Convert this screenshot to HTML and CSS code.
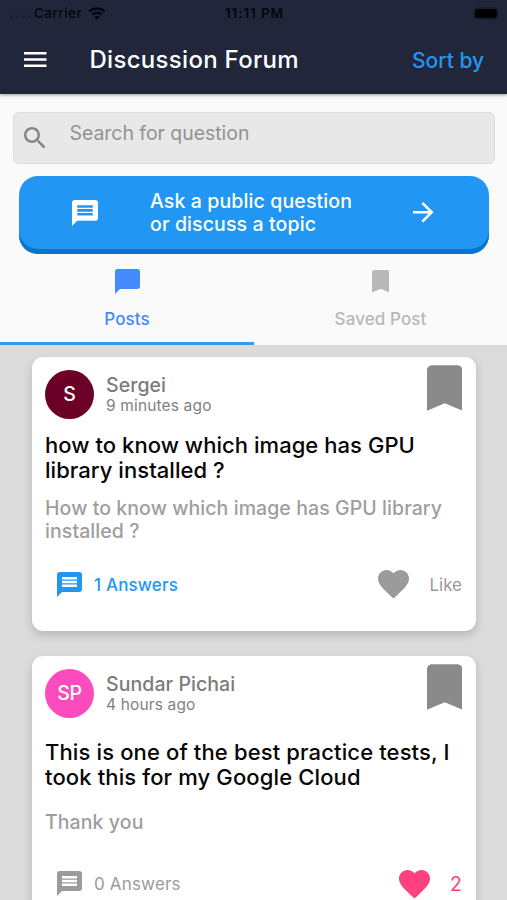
FILE: index.html
```html
<!DOCTYPE html>
<html lang="en">
<head>
<meta charset="utf-8">
<title>Discussion Forum</title>
<link rel="stylesheet" href="styles.css">
</head>
<body>
<svg class="defs" aria-hidden="true">
  <symbol id="chat" viewBox="2 2 20 20"><path d="M20 2H4c-1.1 0-1.99.9-1.99 2L2 22l4-4h14c1.1 0 2-.9 2-2V4c0-1.1-.9-2-2-2zM6 9h12v2H6V9zm12 5H6v-2h12v2zm0-6H6V6h12v2z"/></symbol>
  <symbol id="bubble" viewBox="2 2 20 20"><path d="M20 2H4c-1.1 0-2 .9-2 2v18l4-4h14c1.1 0 2-.9 2-2V4c0-1.1-.9-2-2-2z"/></symbol>
  <symbol id="bookmark" viewBox="5 3 14 18"><path d="M17 3H7c-1.1 0-2 .9-2 2v16l7-3 7 3V5c0-1.1-.9-2-2-2z"/></symbol>
  <symbol id="heart" viewBox="2 3 20 18.35"><path d="M12 21.35l-1.45-1.32C5.4 15.36 2 12.28 2 8.5 2 5.42 4.42 3 7.5 3c1.74 0 3.41.81 4.5 2.09C13.09 3.81 14.76 3 16.5 3 19.58 3 22 5.42 22 8.5c0 3.78-3.4 6.86-8.55 11.54L12 21.35z"/></symbol>
</svg>

<header class="appbar">
  <div class="status">
    <span class="signal"><i></i><i></i><i></i><i></i></span>
    <span class="carrier">Carrier</span>
    <svg class="wifi" viewBox="0 0 18 13"><path d="M9 13l2.600-3.100a4 4 0 0 0-5.200 0z"/><path class="arc" d="M4.200 7.700a7 7 0 0 1 9.600 0M1.200 4.500a11.300 11.300 0 0 1 15.600 0"/></svg>
    <span class="clock">11:11 PM</span>
    <span class="battery"></span>
  </div>
  <div class="toolbar">
    <svg class="menu" viewBox="3 6 18 12"><path d="M3 18h18v-2H3v2zm0-5h18v-2H3v2zm0-7v2h18V6H3z"/></svg>
    <h1 class="title">Discussion Forum</h1>
    <span class="sort">Sort by</span>
  </div>
</header>

<section class="top">
  <div class="search">
    <svg class="search-icon" viewBox="3 3 17.490 17.490"><path d="M15.500 14h-.79l-.28-.27C15.410 12.590 16 11.110 16 9.500 16 5.910 13.090 3 9.500 3S3 5.910 3 9.500 5.910 16 9.500 16c1.610 0 3.090-.59 4.230-1.570l.27.28v.79l5 4.990L20.490 19l-4.990-5zm-6 0C7.010 14 5 11.990 5 9.500S7.010 5 9.500 5 14 7.010 14 9.500 11.990 14 9.500 14z"/></svg>
    <span class="placeholder">Search for question</span>
  </div>
  <div class="ask">
    <svg class="ask-chat"><use href="#chat"/></svg>
    <p class="ask-text">Ask a public question<br>or discuss a topic</p>
    <svg class="arrow" viewBox="4 4 16 16"><path d="M12 4l-1.410 1.410L16.170 11H4v2h12.170l-5.580 5.590L12 20l8-8z"/></svg>
  </div>
  <nav class="tabs">
    <div class="tab active"><svg class="tab-bubble"><use href="#bubble"/></svg><span>Posts</span></div>
    <div class="tab"><svg class="tab-mark"><use href="#bookmark"/></svg><span>Saved Post</span></div>
  </nav>
</section>

<main class="feed">
  <article class="card">
    <div class="head">
      <span class="avatar wine">S</span>
      <div class="who"><span class="name">Sergei</span><span class="time">9 minutes ago</span></div>
      <svg class="save"><use href="#bookmark"/></svg>
    </div>
    <h2 class="question">how to know which image has GPU<br>library installed ?</h2>
    <p class="body">How to know which image has GPU library<br>installed ?</p>
    <div class="actions">
      <svg class="answer-icon blue"><use href="#chat"/></svg><span class="answers blue medium">1 Answers</span>
      <svg class="heart"><use href="#heart"/></svg><span class="like">Like</span>
    </div>
  </article>
  <article class="card second">
    <div class="head">
      <span class="avatar pink-bg">SP</span>
      <div class="who"><span class="name">Sundar Pichai</span><span class="time">4 hours ago</span></div>
      <svg class="save"><use href="#bookmark"/></svg>
    </div>
    <h2 class="question">This is one of the best practice tests, I<br>took this for my Google Cloud</h2>
    <p class="body">Thank you</p>
    <div class="actions">
      <svg class="answer-icon"><use href="#chat"/></svg><span class="answers">0 Answers</span>
      <svg class="heart pink"><use href="#heart"/></svg><span class="count pink">2</span>
    </div>
  </article>
</main>
</body>
</html>
```
FILE: styles.css
```css
* { box-sizing: border-box; }
body { margin: 0; height: 900px; overflow: hidden; display: flex; flex-direction: column; background: #fafafa; font-family: Inter, "Liberation Sans", sans-serif; }
h1, h2, p { margin: 0; }
svg { display: block; flex: none; fill: currentColor; }
span, h1 { white-space: nowrap; }
.defs { display: none; }

.appbar { flex: none; height: 94px; background: #22263a; position: relative; z-index: 1; box-shadow: 0 1px 3px rgba(0,0,0,.4); }
.status { height: 26px; display: grid; grid-template-columns: 24px 54px 137px 1fr auto; align-items: center; padding: 0 8px 0 10px; color: #05060b; font-size: 13.500px; font-weight: 500; }
.signal { display: flex; gap: 3px; padding-top: 6px; }
.signal i { width: 3px; height: 3px; border-radius: 50%; background: #181b2a; }
.carrier { letter-spacing: .45px; }
.wifi { width: 18px; height: 13px; }
.arc { fill: none; stroke: currentColor; stroke-width: 2.400; }
.clock { letter-spacing: .9px; font-weight: 600; }
.battery { width: 22px; height: 9px; margin-right: 2px; border-radius: 3px; background: #000; box-shadow: 0 0 0 2px #1b1e2d; }
.toolbar { height: 68px; display: flex; align-items: center; padding: 0 23px 0 24px; color: #fff; }
.menu { width: 22.500px; height: 15px; margin-top: -1px; }
.title { margin-left: 43px; font-size: 24px; font-weight: 500; line-height: 30px; letter-spacing: .3px; }
.sort { margin: 1px 0 0 auto; font-size: 21px; font-weight: 500; line-height: 30px; color: #2196f3; letter-spacing: -.02px; }

.top { flex: none; height: 251px; display: flex; flex-direction: column; padding-top: 18px; }
.search { height: 52px; margin: 0 12px 0 13px; border: 1px solid #dcdcdc; border-radius: 6px; background: #e8e8e8; display: flex; align-items: center; padding-left: 10px; }
.search-icon { width: 21.500px; height: 21.500px; margin-top: -1px; color: #858585; }
.placeholder { margin: -10px 0 0 24px; font-size: 19.500px; color: #929292; letter-spacing: -.05px; }
.ask { height: 78px; margin: 12px 18px 0 19px; border-radius: 19px; background: #2196f3; box-shadow: inset 0 -5px 0 #0b74ca; color: #fff; display: flex; align-items: center; padding: 0 0 5px 52.500px; }
.ask-chat { width: 26px; height: 26px; }
.ask-text { width: 263px; margin-left: 52.500px; font-size: 19.500px; font-weight: 500; line-height: 23px; letter-spacing: .12px; white-space: nowrap; }
.arrow { width: 20.500px; height: 20.500px; }
.tabs { height: 91px; display: grid; grid-template-columns: 254px 253px; }
.tab { display: flex; flex-direction: column; align-items: center; padding-top: 16px; color: #b8b8b8; font-size: 17px; font-weight: 500; letter-spacing: .1px; }
.tab.active { color: #448aff; border-bottom: 3px solid #3b98ea; padding-top: 15px; }
.tab span { line-height: 22px; }
.tab-bubble { width: 25px; height: 25px; margin-bottom: 14px; }
.tab-mark { width: 17.500px; height: 22.500px; margin-bottom: 15.500px; }

.feed { flex: 1; min-height: 0; overflow: hidden; background: #dbdbdb; padding: 12.300px 31.500px 0 32px; display: flex; flex-direction: column; gap: 25.500px; }
.card { flex: none; height: 273.300px; border-radius: 11px; background: #fff; padding: 7.700px 13.500px 0 13px; box-shadow: 0 4px 8px rgba(0,0,0,.17); display: flex; flex-direction: column; }
.head { height: 68px; display: flex; align-items: flex-start; }
.avatar { width: 49px; height: 49px; margin-top: 5px; border-radius: 50%; display: flex; align-items: center; justify-content: center; color: #fff; font-size: 19.500px; font-weight: 500; letter-spacing: -.3px; }
.wine { background: #6d0027; }
.pink-bg { background: #fc4bbc; }
.who { margin: 8px 0 0 12px; display: flex; flex-direction: column; color: #818181; }
.name { font-size: 19.500px; line-height: 24px; font-weight: 500; color: #7b7b7b; letter-spacing: .07px; }
.time { font-size: 15.500px; line-height: 18px; letter-spacing: .15px; }
.save { width: 35.500px; height: 46px; margin-left: auto; color: #8a8a8a; }
.question { font-size: 22px; line-height: 25.500px; font-weight: 500; color: #050505; white-space: nowrap; letter-spacing: .05px; }
.body { margin-top: 13.500px; font-size: 19.500px; line-height: 23px; font-weight: 500; color: #9e9e9e; white-space: nowrap; letter-spacing: .08px; }
.actions { height: 30px; margin-top: 26px; display: flex; align-items: center; color: #9b9b9b; font-size: 17px; }
.actions span { padding-top: 1px; }
.answer-icon { width: 25px; height: 25px; margin-left: 12px; }
.answers { margin-left: 12px; letter-spacing: .17px; }
.medium { font-weight: 500; }
.blue { color: #2196f3; }
.heart { width: 31px; height: 28.500px; margin-left: auto; }
.like { margin-left: 20.500px; }
.count { margin-left: 20.500px; font-size: 19.500px; }
.pink { color: #ff4081; }
.second .question { padding-top: 8px; letter-spacing: .13px; }
.second .body { margin-top: 20px; }
.second .actions { margin-top: 35px; }
```
